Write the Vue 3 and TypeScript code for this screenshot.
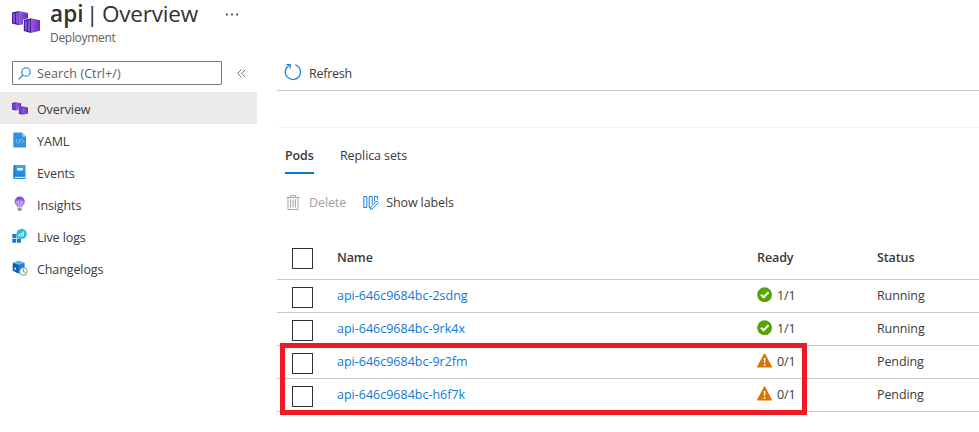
<script setup lang="ts">
interface NavItem {
  label: string
  icon: string
}

interface Pod {
  name: string
  ready: string
  status: string
  ok: boolean
}

const navItems: NavItem[] = [
  { label: 'Overview', icon: 'overview' },
  { label: 'YAML', icon: 'yaml' },
  { label: 'Events', icon: 'events' },
  { label: 'Insights', icon: 'insights' },
  { label: 'Live logs', icon: 'logs' },
  { label: 'Changelogs', icon: 'changes' },
]

const pods: Pod[] = [
  { name: 'api-646c9684bc-2sdng', ready: '1/1', status: 'Running', ok: true },
  { name: 'api-646c9684bc-9rk4x', ready: '1/1', status: 'Running', ok: true },
  { name: 'api-646c9684bc-9r2fm', ready: '0/1', status: 'Pending', ok: false },
  { name: 'api-646c9684bc-h6f7k', ready: '0/1', status: 'Pending', ok: false },
]
</script>

<template>
  <div class="page">
    <svg class="defs" width="0" height="0" aria-hidden="true">
      <defs>
        <linearGradient id="side" x1="0" x2="1">
          <stop offset="0" stop-color="#9b5cec" />
          <stop offset="1" stop-color="#6a2bbd" />
        </linearGradient>
        <linearGradient id="bulb" x1="0" y1="0" x2="0" y2="1">
          <stop offset="0" stop-color="#7a45d0" />
          <stop offset="1" stop-color="#b58af5" />
        </linearGradient>
        <linearGradient id="book" x1="0" y1="0" x2="0" y2="1">
          <stop offset="0" stop-color="#38abee" />
          <stop offset="1" stop-color="#1678d2" />
        </linearGradient>
        <symbol id="containers" viewBox="0 0 28 22">
          <path d="M0 1.500 6.800 0v14.300L0 12.600z" fill="#41208c" />
          <path d="M6.800 0 16 2v10.200l-9.200 2.100z" fill="url(#side)" />
          <path d="M1 2.700 3 2.300v9.800l-2-.5zM4 2.100l2-.4v11l-2-.4z" fill="#8d50dc" />
          <path d="M11 8.800 19 6.500v15.500l-8-2.300z" fill="#fff" />
          <path d="M11.800 9 19 7.200v14.700l-7.200-1.900z" fill="#41208c" />
          <path d="M19 7.200 28 9.300v10.400l-9 2.200z" fill="url(#side)" />
          <path d="M12.900 10.100 14.900 9.700v9.900l-2-.5zM16 9.500l2-.5v11.400l-2-.5z" fill="#8d50dc" />
          <path d="M22 8.400v12.300M25 9v10.900" stroke="#7a3ccc" stroke-width=".4" />
        </symbol>
      </defs>
    </svg>

    <aside class="sidebar">
      <header class="header">
        <svg class="brand" width="28" height="22"><use href="#containers" /></svg>
        <div class="titles">
          <h1 class="title"><b>api</b><span class="bar">|</span><span class="rest">Overview</span></h1>
          <div class="kind">Deployment</div>
        </div>
        <svg class="dots" width="14" height="3" viewBox="0 0 14 3">
          <path d="M0 .5h2v2H0zM5 .5h2v2H5zM10 .5h2v2h-2z" fill="#605e5c" />
        </svg>
      </header>

      <div class="search-row">
        <div class="search">
          <svg width="13" height="13" viewBox="0 0 13 13" fill="none" stroke="#1a7fd6" stroke-width="1.1">
            <circle cx="8" cy="5" r="4.2" />
            <path d="M5 8 .6 12.4" />
          </svg>
          <span>Search (Ctrl+/)</span>
        </div>
        <svg class="collapse" width="9" height="9" viewBox="0 0 9 9" fill="none" stroke="#605e5c" stroke-width=".9">
          <path d="M4.300.7.7 4.400l3.600 3.800M8.300.7 4.700 4.400l3.600 3.800" />
        </svg>
      </div>

      <nav>
        <div v-for="(item, i) in navItems" :key="item.label" class="nav-item" :class="{ active: i === 0 }">
          <svg v-if="item.icon === 'overview'" width="16" height="13"><use href="#containers" /></svg>
          <svg v-else-if="item.icon === 'yaml'" width="16" height="16" viewBox="0 0 16 16">
            <path d="M2 .5h8L14 4.700v10.100a.7.7 0 0 1-.7.7H2a.7.7 0 0 1-.7-.7V1.200A.7.7 0 0 1 2 .5z" fill="#2f90e4" />
            <path d="M10 .5 14 4.700h-3.300a.7.7 0 0 1-.7-.7z" fill="#8ac7f5" />
            <path d="m5.600 7.300-2 2 2 2M9.800 7.300l2 2-2 2M8.500 6.900l-1.600 4.700" fill="none" stroke="#9bd2fa" stroke-width=".9" />
          </svg>
          <svg v-else-if="item.icon === 'events'" width="16" height="16" viewBox="0 0 16 16">
            <path d="M2.500 1h11v14h-11A1.300 1.300 0 0 1 1.200 13.700V2.300A1.300 1.300 0 0 1 2.500 1z" fill="url(#book)" />
            <path d="M2.600 12.800h11v1.300h-11z" fill="#d4e9fa" />
            <path d="M2.700 1v11.500" stroke="#1267b8" stroke-width=".8" />
            <path d="M5.200 3.900h5.600v2.500H5.200z" fill="#f2f9ff" />
          </svg>
          <svg v-else-if="item.icon === 'insights'" width="16" height="16" viewBox="0 0 16 16">
            <path d="M7.700.5a5.100 5.100 0 0 1 5.100 5.100c0 2.900-2.300 3.400-2.700 6H5.300c-.4-2.600-2.700-3.100-2.700-6A5.100 5.100 0 0 1 7.700.5z" fill="url(#bulb)" />
            <path d="M6.600 11.300V6.200M8.800 11.300V6.200M6.600 6.300A1.100 1.100 0 1 1 5.500 5.100h4.400a1.100 1.100 0 1 1-1.100 1.200" fill="none" stroke="#e6d8ff" stroke-width=".7" />
            <path d="M5.500 12h4.400v1.600l-1 1.400H6.500l-1-1.400z" fill="#97999c" />
          </svg>
          <svg v-else-if="item.icon === 'logs'" width="16" height="16" viewBox="0 0 16 16">
            <path d="M.3 6h3.900v3.900H.3zM.3 10.700h3.900v4H.3zM5 10.700h4v4H5z" fill="#1779d2" />
            <circle cx="9.600" cy="5.900" r="5.200" fill="#2ebbd8" />
            <path d="M4.400 10.500V5.900h2v4.300z" fill="#2ebbd8" />
            <path d="M7.200 8.400V5.900M9.200 8.400V4.800M11.200 8.400V3.500" stroke="#effcff" stroke-width="1.100" />
          </svg>
          <svg v-else width="16" height="16" viewBox="0 0 16 16">
            <path d="m6.600.8 6 2.200v7.700l-6 2.800L.8 10.600V3z" fill="#1c7fd8" />
            <path d="m6.600.8 6 2.200-6 2L.8 3z" fill="#5fb8f2" />
            <path d="M.8 3 6.600 5v8.500L.8 10.600z" fill="#0f5fad" />
            <path d="m2.300 7.300 1.800.7v2l-1.800-.8z" fill="#c5e6ff" />
            <circle cx="11.500" cy="11.500" r="3.800" fill="#f7f9f8" stroke="#8b9290" stroke-width=".9" />
            <path d="M11.500 9v2.600l2 1" fill="none" stroke="#4a9b3b" stroke-width=".9" />
          </svg>
          <span>{{ item.label }}</span>
        </div>
      </nav>
    </aside>

    <main class="main">
      <div class="command-bar">
        <svg width="18" height="18" viewBox="0 0 18 18" fill="none" stroke="#1a82da" stroke-width="1.200">
          <path d="M11.200 1.700A7.600 7.600 0 1 1 5.600 2.100" />
          <path d="M2.300 1.500h3.900v3.900" />
        </svg>
        <span class="refresh">Refresh</span>
      </div>
      <div class="spacer"></div>

      <div class="tabs">
        <div class="tab selected">Pods</div>
        <div class="tab">Replica sets</div>
      </div>

      <div class="tools">
        <div class="tool disabled">
          <svg width="14" height="17" viewBox="0 0 14 17" fill="none" stroke="#aaa8a6">
            <path d="M.5 3.500h13M4.500 3.500v-2h5v2M2 3.500v12h10v-12" />
            <path d="M4.500 5.500v8M7 5.500v8M9.500 5.500v8" stroke-width="1.100" />
          </svg>
          <span>Delete</span>
        </div>
        <div class="tool">
          <svg width="16" height="16" viewBox="0 0 16 16" fill="none" stroke="#1a7fd6">
            <path d="M.8 1.500h3v11h-3zM6.200 12.500V1.500h3v7.300M6.200 12.500h1.500M11.500 6.500v-5h3v3" />
            <path d="m7.300 14.500.6-2.600 5.800-6 1.700 1.700-5.700 6z" />
          </svg>
          <span>Show labels</span>
        </div>
      </div>

      <div class="table">
        <div class="row head">
          <span class="check"></span>
          <span>Name</span>
          <span>Ready</span>
          <span>Status</span>
        </div>
        <div v-for="pod in pods" :key="pod.name" class="row">
          <span class="check"></span>
          <a class="name">{{ pod.name }}</a>
          <span class="ready">
            <svg v-if="pod.ok" width="16" height="16" viewBox="0 0 16 16">
              <circle cx="7.600" cy="7.700" r="7.400" fill="#57a300" />
              <path d="m4 7.700 2.600 2.600 4.900-5" fill="none" stroke="#fff" stroke-width="2" />
            </svg>
            <svg v-else width="16" height="16" viewBox="0 0 16 16">
              <path d="M6.800 1.100a.9.9 0 0 1 1.500 0l6.600 12.300a.7.7 0 0 1-.6 1.100H.8a.7.7 0 0 1-.6-1.100z" fill="#db7500" />
              <path d="M6.700 5h1.800l-.3 5H7z" fill="#fff" />
              <circle cx="7.600" cy="11.900" r=".95" fill="#fff" />
            </svg>
            <span>{{ pod.ready }}</span>
          </span>
          <span>{{ pod.status }}</span>
        </div>
        <div class="highlight"></div>
      </div>
    </main>
  </div>
</template>

<style>
body {
  background: #fff;
}
</style>

<style scoped>
.page {
  display: flex;
  width: 979px;
  height: 432px;
  overflow: hidden;
  background: #fff;
  color: #3b3a39;
  font: 12.5px/20px "Open Sans", "Noto Sans", sans-serif;
  letter-spacing: -0.1px;
  white-space: nowrap;
}
.page * {
  box-sizing: border-box;
}
.page svg {
  display: block;
  flex: none;
}
.page .defs {
  position: absolute;
}
.sidebar {
  width: 257px;
  flex: none;
}
.header {
  display: flex;
  height: 61px;
  padding-left: 12px;
}
.brand {
  margin-top: 11px;
}
.titles {
  width: 176px;
  margin-left: 10px;
}
.title {
  display: flex;
  margin: 0;
  font-size: 22.5px;
  font-weight: 400;
  line-height: 28px;
  color: #323130;
}
.title b {
  width: 36px;
  font-weight: 600;
  letter-spacing: 0.1px;
}
.bar {
  width: 16px;
}
.rest {
  letter-spacing: -0.2px;
}
.kind {
  font-size: 12px;
  line-height: 20px;
  letter-spacing: -0.3px;
  color: #605e5c;
}
.dots {
  margin-top: 13px;
}
.search-row {
  display: flex;
  align-items: center;
  height: 24px;
  margin: 0 0 7px 12px;
}
.search {
  display: flex;
  align-items: center;
  width: 210px;
  height: 24px;
  padding-left: 5px;
  border: 1px solid #7a7876;
  border-radius: 1px;
  color: #605e5c;
}
.search span {
  margin: 1px 0 0 6px;
  letter-spacing: 0.08px;
}
.collapse {
  margin-left: 14.5px;
}
.nav-item {
  display: flex;
  align-items: center;
  gap: 9px;
  height: 32px;
  padding: 3px 0 0 12px;
}
.nav-item svg {
  margin-top: -3px;
}
.nav-item.active {
  background: #edebe9;
}
.main {
  flex: 1;
  padding-left: 20px;
}
.command-bar {
  display: flex;
  align-items: center;
  gap: 7px;
  height: 91px;
  padding: 54px 0 0 7px;
  border-bottom: 1px solid #c8c8c8;
}
.refresh {
  padding-top: 3px;
  letter-spacing: -0.25px;
}
.spacer {
  height: 37px;
  border-bottom: 1px solid #f5f4f3;
}
.tabs {
  display: flex;
  gap: 26px;
  height: 46px;
  padding-left: 8px;
}
.tab {
  padding-top: 18px;
  height: 46px;
}
.selected {
  width: 29px;
  border-bottom: 2px solid #0078d4;
  font-weight: 600;
}
.tools {
  display: flex;
  gap: 17px;
  height: 57px;
  padding: 0 0 0 9px;
}
.tool {
  display: flex;
  align-items: center;
  gap: 7px;
  height: 57px;
}
.disabled {
  color: #a19f9d;
  gap: 9px;
}
.table {
  position: relative;
}
.row {
  display: grid;
  grid-template-columns: 45px 420px 120px 1fr;
  align-items: center;
  height: 33px;
  padding-left: 15px;
  border-bottom: 1px solid #c8c8c8;
}
.head {
  height: 49px;
  font-weight: 600;
}
.head > span {
  padding-top: 6px;
}
.check {
  width: 21px;
  height: 21px;
  margin-top: 2px;
  border: 1px solid #323130;
}
.head .check {
  margin-top: 6px;
}
a.name {
  color: #0f7ad3;
  letter-spacing: 0;
}
.ready {
  display: flex;
  align-items: center;
  gap: 4px;
}
.ready svg {
  margin-top: -2px;
}
.highlight {
  position: absolute;
  top: 112px;
  left: 3px;
  width: 527px;
  height: 72px;
  border: 5px solid #ed1c24;
}
</style>
